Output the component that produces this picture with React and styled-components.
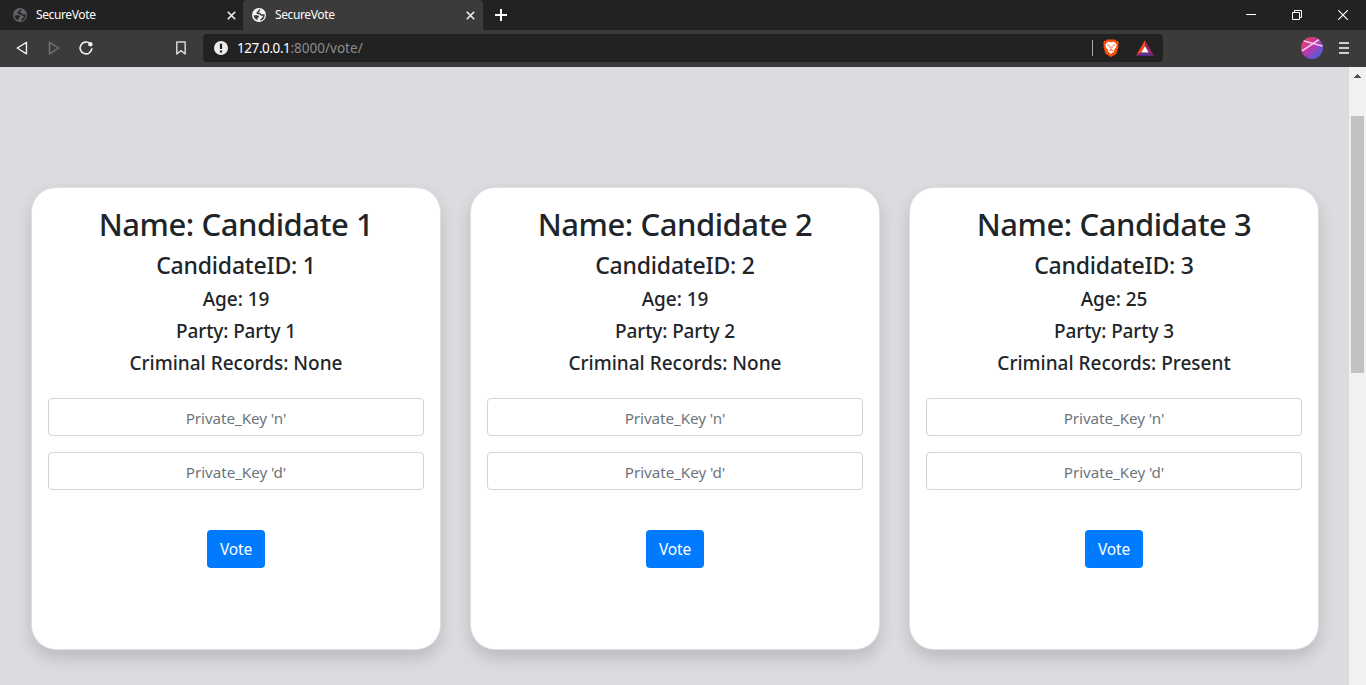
import React from "react";
import styled, { createGlobalStyle } from "styled-components";

const Global = createGlobalStyle`
  *, *::before, *::after { box-sizing: border-box; }
  body {
    margin: 0;
    overflow: hidden;
    font-family: "Noto Sans", "Open Sans", sans-serif;
  }
  svg { display: block; flex: none; }
`;

const Window = styled.div`
  width: 1366px;
  height: 685px;
  display: flex;
  flex-direction: column;
  overflow: hidden;
`;

const TabBar = styled.div`
  height: 30px;
  flex: none;
  display: flex;
  background: #222222;
`;

const Tab = styled.div`
  width: ${(p) => p.$width}px;
  height: 30px;
  display: flex;
  align-items: center;
  padding: 0 ${(p) => p.$padRight}px 0 ${(p) => p.$padLeft}px;
  border-radius: 4px 4px 0 0;
  background: ${(p) => (p.$active ? "#3b3b3b" : "transparent")};
`;

const TabTitle = styled.span`
  flex: 1;
  margin-left: 9px;
  color: #ffffff;
  font-size: 12px;
  line-height: 16px;
  letter-spacing: -0.38px;
`;

const NewTab = styled.div`
  width: 36px;
  display: flex;
  align-items: center;
  justify-content: center;
`;

const WindowControls = styled.div`
  margin-left: auto;
  display: flex;
  height: 29px;
`;

const WindowControl = styled.div`
  width: 46px;
  display: flex;
  align-items: center;
  justify-content: center;
`;

const Toolbar = styled.div`
  height: 37px;
  flex: none;
  display: flex;
  align-items: center;
  padding: 0 14px 1px 14px;
  background: #3b3b3b;
`;

const NavButtons = styled.div`
  display: flex;
  gap: 16px;
  width: 158px;
`;

const Bookmark = styled.div`
  width: 31px;
`;

const AddressBar = styled.div`
  width: 960px;
  height: 28px;
  display: flex;
  align-items: center;
  padding: 0 9px 0 11px;
  border-radius: 4px;
  background: #222222;
`;

const Url = styled.span`
  flex: 1;
  margin-left: 9px;
  color: #8c8c8c;
  font-size: 13.5px;
  line-height: 18px;
  letter-spacing: 0.02px;
`;

const Host = styled.span`
  color: #ffffff;
  letter-spacing: -0.42px;
`;

const Divider = styled.span`
  width: 1px;
  height: 16px;
  margin-right: 10px;
  background: #a8a8a8;
`;

const Extensions = styled.div`
  display: flex;
  align-items: center;
  gap: 17px;
`;

const ProfileArea = styled.div`
  margin-left: auto;
  display: flex;
  align-items: center;
  gap: 16px;
  padding-right: 3px;
`;

const Viewport = styled.div`
  flex: 1;
  min-height: 0;
  display: flex;
`;

const Page = styled.main`
  width: 1349px;
  display: flex;
  align-items: flex-start;
  gap: 29px;
  padding: 120px 0 0 31px;
  background: #dbdce0;
`;

const Card = styled.section`
  width: 410px;
  height: 463px;
  flex: none;
  display: flex;
  flex-direction: column;
  align-items: center;
  padding: 16px;
  border: 1px solid rgba(0, 0, 0, 0.125);
  border-radius: 25px;
  background: #ffffff;
  box-shadow: 0 8px 16px rgba(0, 0, 0, 0.15);
  color: #212529;
`;

const Line = styled.div`
  height: ${(p) => p.$height}px;
  margin-bottom: 8px;
  padding-top: ${(p) => p.$drop || 0}px;
  font-size: ${(p) => p.$size}px;
  line-height: ${(p) => p.$height}px;
  font-weight: 500;
  letter-spacing: ${(p) => p.$spacing}px;
  white-space: nowrap;
`;

const KeyInput = styled.input`
  width: 100%;
  height: 38px;
  flex: none;
  margin: ${(p) => p.$top}px 0 0;
  padding: 7px 12px 5px;
  border: 1px solid #ced4da;
  border-radius: 4px;
  background: #ffffff;
  font: 400 15.2px/24px "Noto Sans", "Open Sans", sans-serif;
  letter-spacing: -0.05px;
  text-align: center;
  outline: none;
  &::placeholder { color: #6c757d; opacity: 1; }
`;

const VoteButton = styled.button`
  width: 58px;
  height: 38px;
  flex: none;
  margin-top: 40px;
  padding: 0;
  border: 0;
  border-radius: 4px;
  background: #007bff;
  color: #ffffff;
  font: 400 15.5px/38px "Noto Sans", "Open Sans", sans-serif;
  letter-spacing: -0.2px;
`;

const Scrollbar = styled.div`
  width: 17px;
  display: flex;
  flex-direction: column;
  align-items: center;
  background: #f1f1f1;
`;

const ScrollArrow = styled.div`
  height: 49px;
  padding-top: 7px;
`;

const ScrollThumb = styled.div`
  width: 13px;
  height: 257px;
  background: #c1c1c1;
`;

const Globe = ({ color }) => (
  <svg width="14" height="14" viewBox="0 0 14 14">
    <circle cx="7" cy="7" r="7" fill={color.disc} />
    <path
      d="M8.200 1.800C6.400 2.400 7 4 5.600 4.300c-.7.2-.3 1.300.4 1.300h1.600c.9.1.8 1.400 1.700 1.500h2.600c-.1 2.300-1.600 4.200-3.500 4.800"
      fill="none" stroke={color.land} strokeWidth="1.500"
    />
    <path d="M1.700 7.200h3.500c1.500.1 2 .9 1.700 1.900-.2.700-1.300.5-1.400 1.300v1.800C3.200 11.600 1.800 9.600 1.700 7.200z" fill={color.land} />
  </svg>
);

const Cross = () => (
  <svg width="9" height="9" viewBox="0 0 9 9" stroke="#f0f0f0" strokeWidth="1.6">
    <path d="M.8.8l7.400 7.400M8.200.8L.8 8.200" />
  </svg>
);

const Triangle = ({ forward }) => (
  <svg width="16" height="16" viewBox="0 0 16 16" fill="none" strokeWidth="1.4" strokeLinejoin="round"
    stroke={forward ? "#767676" : "#f0f0f0"}>
    <path d={forward ? "M3.500 2.400v11.400L12.800 8z" : "M12.500 2.400v11.400L3.200 8z"} />
  </svg>
);

const Reload = () => (
  <svg width="16" height="16" viewBox="0 0 16 16">
    <path d="M12 3.600A5.900 5.900 0 1 0 13.900 8.400" fill="none" stroke="#f0f0f0" strokeWidth="1.600" />
    <circle cx="12.400" cy="4.300" r="2.200" fill="#f0f0f0" />
  </svg>
);

const BookmarkIcon = () => (
  <svg width="18" height="16" viewBox="0 0 18 16">
    <path d="M4.800 2h8.400v12L9 10.700 4.800 14z" fill="none" stroke="#d6d6d6" strokeWidth="1.500" strokeLinejoin="round" />
  </svg>
);

const Warning = () => (
  <svg width="14" height="14" viewBox="0 0 14 14">
    <circle cx="7" cy="7" r="7" fill="#ececec" />
    <path d="M5.900 2.700h2.200v5.200H5.900zM5.900 9.400h2.200v2.100H5.900z" fill="#222222" />
  </svg>
);

const BraveLion = () => (
  <svg width="16" height="18" viewBox="0 0 16 18">
    <path d="M4 .4h8l1.500 1.500 1.300-.1 1 2.700-.6 1.700.3 1.500-2 7L8 17.900 2.500 14.700l-2-7 .3-1.500L.2 4.500l1-2.700 1.300.1z" fill="#fb4e0a" />
    <path d="M5 2.700l3 .5 3-.5 2.700 2.700-.7 3-1.900 2.300.1 1.500L8 14.900l-3.200-2.700.1-1.500L3 8.400l-.7-3z" fill="#ffffff" />
    <path d="M4.200 6l2 .6M11.800 6l-2 .6M6.800 7.200l.3 2.100M9.200 7.200l-.3 2.100M5.800 12l2.200-1.200 2.200 1.200" fill="none" stroke="#fb4e0a" strokeWidth=".9" />
    <path d="M6.900 9.700h2.200L8 10.900z" fill="#fb4e0a" />
  </svg>
);

const BatTriangle = () => (
  <svg width="18" height="16" viewBox="0 0 18 16">
    <path d="M9 .3L0 15.700l5.400-3.200L9 6z" fill="#ff4724" />
    <path d="M9 .3l9 15.400-5.400-3.200L9 6z" fill="#9e1f63" />
    <path d="M0 15.700h18l-5.400-3.200H5.400z" fill="#662d91" />
    <path d="M9 5.900l3.700 6.700H5.300z" fill="#ffffff" />
  </svg>
);

const Avatar = () => (
  <svg width="22" height="22" viewBox="0 0 22 22">
    <defs>
      <linearGradient id="avatar" x1="0.1" y1="0.1" x2="0.85" y2="0.9">
        <stop offset="0" stopColor="#f03f65" />
        <stop offset="0.45" stopColor="#c135ab" />
        <stop offset="1" stopColor="#4661dc" />
      </linearGradient>
    </defs>
    <circle cx="11" cy="11" r="11" fill="url(#avatar)" />
    <path d="M1 13.900L18 2.600M2.700 3.900L21.600 9.100" stroke="#f8dcf4" strokeWidth="1.300" />
  </svg>
);

const MenuIcon = () => (
  <svg width="10" height="12" viewBox="0 0 10 12" shapeRendering="crispEdges">
    <path d="M0 0h10v2H0zM0 5h10v2H0zM0 10h10v2H0z" fill="#d0d0d0" />
  </svg>
);

const tabs = [
  { width: 243, padLeft: 13, padRight: 7, active: false, globe: { disc: "#5f6368", land: "#222222" } },
  { width: 240, padLeft: 9, padRight: 8, active: true, globe: { disc: "#f1f3f4", land: "#3b3b3b" } },
];

const candidates = [
  { id: 1, age: 19, records: "None" },
  { id: 2, age: 19, records: "None" },
  { id: 3, age: 25, records: "Present" },
];

function BrowserTabs() {
  return (
    <TabBar>
      {tabs.map((tab) => (
        <Tab key={tab.padLeft} $width={tab.width} $padLeft={tab.padLeft} $padRight={tab.padRight} $active={tab.active}>
          <Globe color={tab.globe} />
          <TabTitle>SecureVote</TabTitle>
          <Cross />
        </Tab>
      ))}
      <NewTab>
        <svg width="12" height="12" viewBox="0 0 12 12" fill="#ffffff" shapeRendering="crispEdges">
          <path d="M5 0h2v12H5zM0 5h12v2H0z" />
        </svg>
      </NewTab>
      <WindowControls>
        <WindowControl>
          <svg width="10" height="1"><rect width="10" height="1" fill="#ffffff" /></svg>
        </WindowControl>
        <WindowControl>
          <svg width="10" height="10" fill="none" stroke="#ffffff">
            <path d="M.5 2.500h7v7h-7zM2.500 2.500v-2h7v7h-2" />
          </svg>
        </WindowControl>
        <WindowControl>
          <svg width="10" height="10" stroke="#ffffff" strokeWidth="1.200">
            <path d="M.2.200l9.600 9.600M9.800.200L.2 9.800" />
          </svg>
        </WindowControl>
      </WindowControls>
    </TabBar>
  );
}

function BrowserToolbar() {
  return (
    <Toolbar>
      <NavButtons>
        <Triangle />
        <Triangle forward />
        <Reload />
      </NavButtons>
      <Bookmark>
        <BookmarkIcon />
      </Bookmark>
      <AddressBar>
        <Warning />
        <Url><Host>127.0.0.1</Host>:8000/vote/</Url>
        <Divider />
        <Extensions>
          <BraveLion />
          <BatTriangle />
        </Extensions>
      </AddressBar>
      <ProfileArea>
        <Avatar />
        <MenuIcon />
      </ProfileArea>
    </Toolbar>
  );
}

function CandidateCard({ id, age, records }) {
  return (
    <Card>
      <Line $size={31} $height={38.4} $spacing={-0.45} $drop={1}>Name: Candidate {id}</Line>
      <Line $size={23} $height={28.8} $spacing={-0.2} $drop={1}>CandidateID: {id}</Line>
      <Line $size={19} $height={24} $spacing={-0.05}>Age: {age}</Line>
      <Line $size={19} $height={24} $spacing={-0.12}>Party: Party {id}</Line>
      <Line $size={19} $height={24} $spacing={0}>Criminal Records: {records}</Line>
      <KeyInput $top={14.8} placeholder="Private_Key 'n'" />
      <KeyInput $top={16} placeholder="Private_Key 'd'" />
      <VoteButton>Vote</VoteButton>
    </Card>
  );
}

export default function App() {
  return (
    <Window>
      <Global />
      <BrowserTabs />
      <BrowserToolbar />
      <Viewport>
        <Page>
          {candidates.map((c) => <CandidateCard key={c.id} {...c} />)}
        </Page>
        <Scrollbar>
          <ScrollArrow>
            <svg width="7" height="4" viewBox="0 0 7 4" fill="#505050" shapeRendering="crispEdges">
              <path d="M3 0h1v1h1v1h1v1h1v1H0V3h1V2h1V1h1z" />
            </svg>
          </ScrollArrow>
          <ScrollThumb />
        </Scrollbar>
      </Viewport>
    </Window>
  );
}
